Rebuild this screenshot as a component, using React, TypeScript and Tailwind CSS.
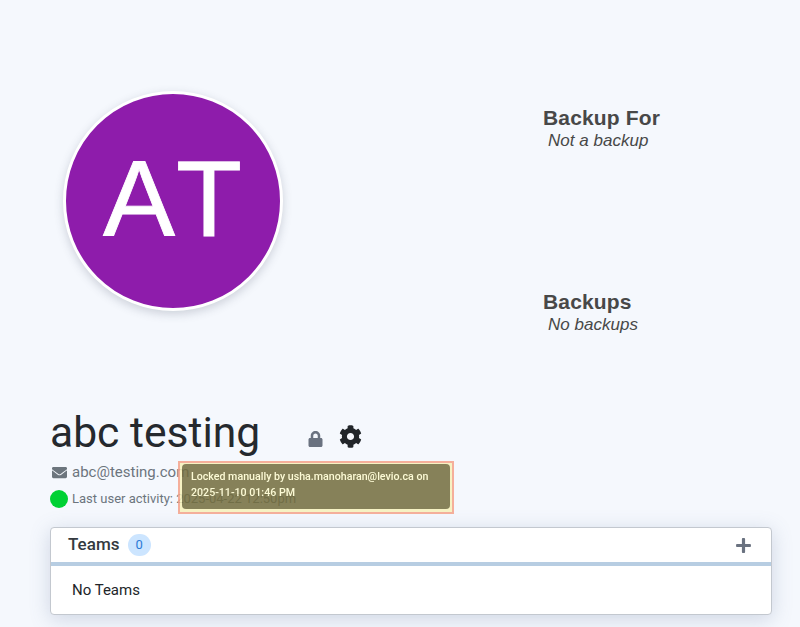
import { FaCog, FaEnvelope, FaLock, FaPlus } from "react-icons/fa";

function BackupBlock({ title, note }: { title: string; note: string }) {
  return (
    <div className="font-['Liberation_Sans',sans-serif] text-[#484848]">
      <h3 className="text-[21px] font-bold leading-[23px] tracking-[0.15px]">{title}</h3>
      <p className="pl-[5px] text-[17px] italic leading-[23px] tracking-[0.02px]">{note}</p>
    </div>
  );
}

function LockTooltip() {
  return (
    <div className="absolute left-[128px] top-[57px] w-[276px] border-2 border-[#f5a38a] bg-[#f7f2ba] pb-[3px] pl-[2px] pr-[2px] pt-[1px] opacity-85">
      <div className="rounded-[4px] bg-[#736d3d] px-[9px] pb-[8px] pt-[5px] text-[10.65px] font-medium leading-[16px] text-[#fffcd0]">
        Locked manually by usha.manoharan@levio.ca on
        <br />
        2025-11-10 01:46 PM
      </div>
    </div>
  );
}

export default function App() {
  return (
    <div className="h-[627px] w-[800px] overflow-hidden bg-[#f5f8fd] pl-[50px] pr-[28px] font-['Roboto',sans-serif]">
      <div className="flex h-[404px]">
        <div className="w-[493px] pl-[13px] pt-[91px]">
          <div className="flex h-[220px] w-[220px] items-center justify-center rounded-full border-[3px] border-white bg-[#8e1cab] pb-[4px] font-['Liberation_Sans',sans-serif] text-[108px] leading-none text-white shadow-[0_3px_10px_rgba(60,70,90,0.22)]">
            <span className="tracking-[1px] blur-[0.7px] [-webkit-text-stroke:0.8px_white] [font-kerning:none]">AT</span>
          </div>
        </div>
        <div className="flex flex-col pt-[106px]">
          <BackupBlock title="Backup For" note="Not a backup" />
          <div className="mt-[138px]">
            <BackupBlock title="Backups" note="No backups" />
          </div>
        </div>
      </div>

      <div className="relative">
        <div className="flex h-[57px] items-center">
          <h1 className="text-[42.6px] font-normal leading-[57px] text-[#25292e]">abc testing</h1>
          <FaLock className="ml-[48px] mt-[12px] h-[16px] w-[15px] text-[#6a7280]" />
          <FaCog className="ml-[16px] mt-[8px] h-[23px] w-[23px] text-[#212529]" />
        </div>
        <div className="mt-[1px] flex h-[20px] items-center pl-[2px] text-[15px] text-[#6c757d]">
          <FaEnvelope className="mr-[5px] h-[15px] w-[15px]" />
          abc@testing.com
        </div>
        <div className="mt-[7px] flex h-[20px] items-center text-[13px] text-[#6c757d]">
          <span className="mr-[4px] h-[18px] w-[18px] rounded-full bg-[#00d134]" />
          Last user activity: 2025-04-22 12:50pm
        </div>
        <LockTooltip />
      </div>

      <div className="mt-[18px] h-[88px] overflow-hidden rounded-[4px] border border-[#c3c8cf] bg-white shadow-[0_4px_20px_rgba(90,110,150,0.25)]">
        <div className="flex h-[38px] items-center border-b-[4px] border-[#b7cde2] pl-[17px] pr-[19px]">
          <span className="text-[17px] font-medium tracking-[0.05px] text-[#343a40]">Teams</span>
          <span className="ml-[8px] flex h-[22px] w-[23px] items-center justify-center rounded-full bg-[#cce5ff] text-[13px] text-[#2a7ad6]">
            0
          </span>
          <FaPlus className="ml-auto h-[17px] w-[17px] text-[#6a7280]" />
        </div>
        <div className="pl-[21px] pt-[13px] text-[15px] leading-[22px] text-[#212529]">No Teams</div>
      </div>
    </div>
  );
}
